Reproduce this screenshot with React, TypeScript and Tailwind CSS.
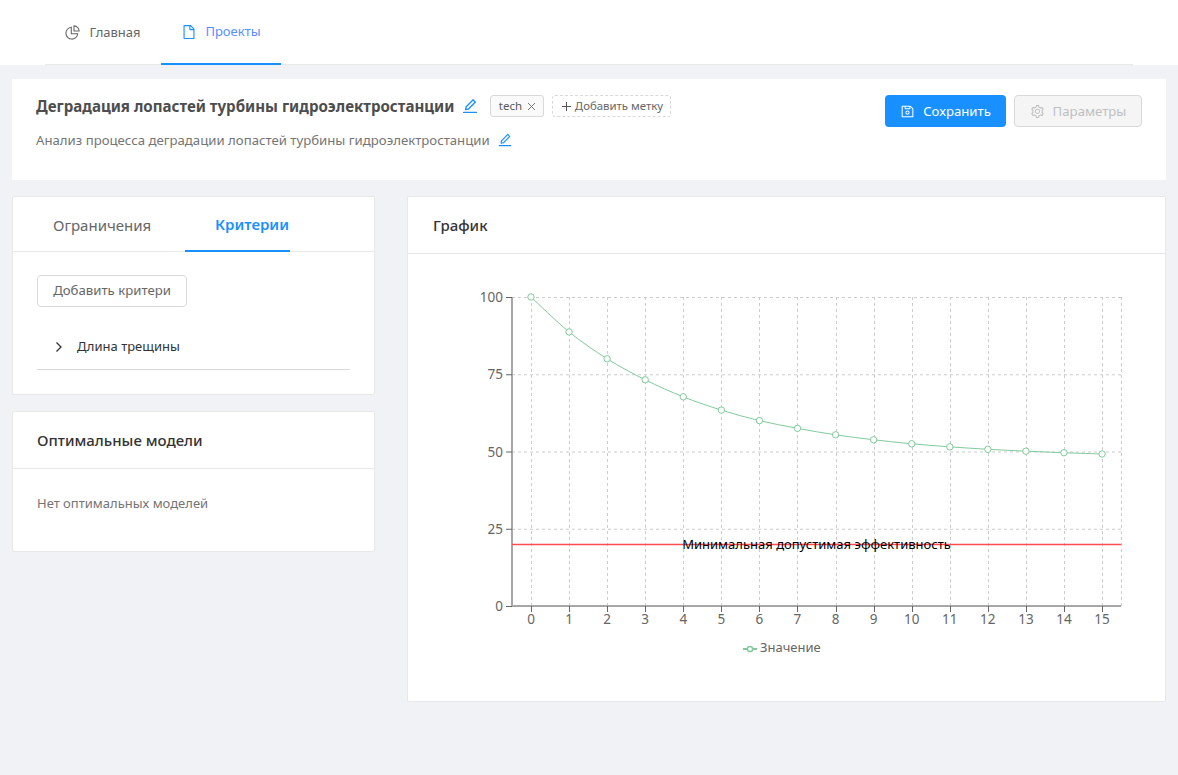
import React from "react";

const values = [100, 88.7, 80, 73.2, 67.7, 63.4, 60, 57.5, 55.4, 53.8, 52.5, 51.5, 50.7, 50.1, 49.6, 49.2];
// The SVG origin sits at page (408, 254)
const X0 = 123;
const STEP = 38.07;
const px = (i: number) => X0 + i * STEP;
const py = (v: number) => 352 - v * 3.09;

function smooth(pts: [number, number][]) {
  let d = `M${pts[0][0]},${pts[0][1]}`;
  for (let i = 0; i < pts.length - 1; i++) {
    const p0 = pts[Math.max(i - 1, 0)];
    const p1 = pts[i];
    const p2 = pts[i + 1];
    const p3 = pts[Math.min(i + 2, pts.length - 1)];
    d += ` C${p1[0] + (p2[0] - p0[0]) / 6},${p1[1] + (p2[1] - p0[1]) / 6} ${p2[0] - (p3[0] - p1[0]) / 6},${p2[1] - (p3[1] - p1[1]) / 6} ${p2[0]},${p2[1]}`;
  }
  return d;
}

function Chart() {
  const pts = values.map((v, i) => [px(i), py(v)] as [number, number]);
  const axis = "#a6a6a6";
  const tick = "#666666";
  return (
    <svg width="757" height="447" className="block" style={{ fontFamily: '"Noto Sans", sans-serif' }}>
      <g stroke="#cccccc" strokeDasharray="3 3" fill="none">
        {[0, 25, 50, 75, 100].map((v) => (
          <line key={v} x1="104" x2="713.5" y1={py(v) + 0.5} y2={py(v) + 0.5} />
        ))}
        {values.map((_, i) => (
          <line key={i} x1={Math.round(px(i)) + 0.5} x2={Math.round(px(i)) + 0.5} y1="43" y2="352" />
        ))}
        <line x1="713.5" x2="713.5" y1="43" y2="352" />
      </g>
      <line x1="104" x2="104" y1="43" y2="353" stroke={axis} strokeWidth="2" />
      <line x1="103" x2="713" y1="352" y2="352" stroke={axis} strokeWidth="2" />
      {[0, 25, 50, 75, 100].map((v) => (
        <g key={v}>
          <line x1="98" x2="104" y1={py(v) + 0.5} y2={py(v) + 0.5} stroke={tick} />
          <text x="95" y={py(v) + 5} textAnchor="end" fontSize="13.5" fill={tick}>
            {v}
          </text>
        </g>
      ))}
      {values.map((_, i) => (
        <g key={i}>
          <line x1={Math.round(px(i)) + 0.5} x2={Math.round(px(i)) + 0.5} y1="352" y2="358" stroke={tick} />
          <text x={px(i)} y="370" textAnchor="middle" fontSize="13.5" fill={tick}>
            {i}
          </text>
        </g>
      ))}
      <line x1="104" x2="713" y1="290.5" y2="290.5" stroke="#ff4d4f" strokeWidth="1.5" />
      <text x="408.5" y="295" textAnchor="middle" fontSize="13" fill="#000000">
        Минимальная допустимая эффективность
      </text>
      <path d={smooth(pts)} fill="none" stroke="#82ca9d" strokeWidth="1" />
      {pts.map((p, i) => (
        <circle key={i} cx={p[0]} cy={p[1]} r="3.2" fill="#ffffff" stroke="#82ca9d" />
      ))}
      <line x1="335" x2="349" y1="395" y2="395" stroke="#82ca9d" strokeWidth="2" />
      <circle cx="342" cy="395" r="2.6" fill="#ffffff" stroke="#82ca9d" strokeWidth="1.5" />
      <text x="352" y="398" fontSize="13" fill="#666666">
        Значение
      </text>
    </svg>
  );
}

function Pencil({ size = 15 }: { size?: number }) {
  return (
    <svg width={size} height={size} viewBox="0 0 1024 1024" fill="#1890ff" className="shrink-0">
      <path d="M257.7 752c2 0 4-.2 6-.5L431.9 722c2-.4 3.9-1.3 5.3-2.8l423.9-423.9a9.96 9.96 0 0 0 0-14.1L694.9 114.9c-1.9-1.9-4.4-2.9-7.1-2.9s-5.2 1-7.1 2.9L256.8 538.8c-1.5 1.5-2.4 3.3-2.8 5.3l-29.5 168.2a33.5 33.5 0 0 0 9.4 29.8c6.6 6.4 14.9 9.9 23.8 9.9zm67.4-174.4L687.8 215l73.3 73.3-362.7 362.6-88.9 15.7 15.6-89zM880 836H144c-17.7 0-32 14.3-32 32v36c0 4.4 3.6 8 8 8h784c4.4 0 8-3.6 8-8v-36c0-17.7-14.3-32-32-32z" />
    </svg>
  );
}

function PieIcon() {
  return (
    <svg width="15" height="15" viewBox="0 0 15 15" fill="none" stroke="#666666" strokeWidth="1.1">
      <path d="M6.3 2.3a5.9 5.9 0 1 0 6.4 6.4H6.3V2.3z" />
      <path d="M9 0.9a5.4 5.4 0 0 1 5.1 5.1H9V0.9z" />
    </svg>
  );
}

function FileIcon() {
  return (
    <svg width="16" height="16" viewBox="0 0 1024 1024" fill="#1890ff">
      <path d="M854.6 288.6L639.4 73.4c-6-6-14.1-9.4-22.6-9.4H192c-17.7 0-32 14.3-32 32v832c0 17.7 14.3 32 32 32h640c17.7 0 32-14.3 32-32V311.3c0-8.5-3.4-16.7-9.4-22.7zM790.2 326H602V137.8L790.2 326zm1.8 562H232V136h302v216a42 42 0 0 0 42 42h216v494z" />
    </svg>
  );
}

function Save() {
  return (
    <svg width="15" height="15" viewBox="0 0 1024 1024" fill="currentColor">
      <path d="M893.3 293.3L730.7 130.7c-7.5-7.5-16.7-13-26.7-16V112H144c-17.7 0-32 14.3-32 32v736c0 17.7 14.3 32 32 32h736c17.7 0 32-14.3 32-32V338.5c0-17-6.7-33.2-18.7-45.2zM384 184h256v104H384V184zm456 656H184V184h136v136c0 17.7 14.3 32 32 32h320c17.7 0 32-14.3 32-32V205.8l136 136V840zM512 442c-79.5 0-144 64.5-144 144s64.5 144 144 144 144-64.5 144-144-64.5-144-144-144zm0 224c-44.2 0-80-35.8-80-80s35.8-80 80-80 80 35.8 80 80-35.8 80-80 80z" />
    </svg>
  );
}

function Gear() {
  return (
    <svg width="15" height="15" viewBox="0 0 1024 1024" fill="currentColor">
      <path d="M924.8 625.7l-65.5-56c3.1-19 4.7-38.4 4.7-57.8s-1.6-38.8-4.7-57.8l65.5-56a32.03 32.03 0 0 0 9.3-35.2l-.9-2.6a443.74 443.74 0 0 0-79.7-137.9l-1.8-2.1a32.12 32.12 0 0 0-35.1-9.5l-81.3 28.9c-30-24.6-63.5-44-99.7-57.6l-15.7-85a32.05 32.05 0 0 0-25.8-25.7l-2.7-.5c-52.1-9.4-106.9-9.4-159 0l-2.7.5a32.05 32.05 0 0 0-25.8 25.7l-15.8 85.4a351.86 351.86 0 0 0-99 57.4l-81.9-29.1a32 32 0 0 0-35.1 9.5l-1.8 2.1a446.02 446.02 0 0 0-79.7 137.9l-.9 2.6c-4.5 12.5-.8 26.5 9.3 35.2l66.3 56.6c-3.1 18.8-4.6 38-4.6 57.1 0 19.2 1.5 38.4 4.6 57.1L99 625.5a32.03 32.03 0 0 0-9.3 35.2l.9 2.6c18.1 50.4 44.9 96.9 79.7 137.9l1.8 2.1a32.12 32.12 0 0 0 35.1 9.5l81.9-29.1c29.8 24.5 63.1 43.9 99 57.4l15.8 85.4a32.05 32.05 0 0 0 25.8 25.7l2.7.5a449.4 449.4 0 0 0 159 0l2.7-.5a32.05 32.05 0 0 0 25.8-25.7l15.7-85a350 350 0 0 0 99.7-57.6l81.3 28.9a32 32 0 0 0 35.1-9.5l1.8-2.1c34.8-41.1 61.6-87.5 79.7-137.9l.9-2.6c4.5-12.3.8-26.3-9.3-35zM788.3 465.9c2.5 15.1 3.8 30.6 3.8 46.1s-1.3 31-3.8 46.1l-6.6 40.1 74.7 63.9a370.03 370.03 0 0 1-42.6 73.6L721 702.8l-31.4 25.8c-23.9 19.6-50.5 35-79.3 45.8l-38.1 14.3-17.9 97a377.5 377.5 0 0 1-85 0l-17.9-97.2-37.8-14.5c-28.5-10.8-55-26.2-78.7-45.7l-31.4-25.9-93.4 33.2c-17-22.9-31.2-47.6-42.6-73.6l75.5-64.5-6.5-40c-2.4-14.9-3.7-30.3-3.7-45.5 0-15.3 1.2-30.6 3.7-45.5l6.5-40-75.5-64.5c11.3-26.1 25.6-50.7 42.6-73.6l93.4 33.2 31.4-25.9c23.7-19.5 50.2-34.9 78.7-45.7l37.9-14.3 17.9-97.2c28.1-3.2 56.8-3.2 85 0l17.9 97 38.1 14.3c28.7 10.8 55.4 26.2 79.3 45.8l31.4 25.8 92.8-32.9c17 22.9 31.2 47.6 42.6 73.6L781.8 426l6.5 39.9zM512 326c-97.2 0-176 78.8-176 176s78.8 176 176 176 176-78.8 176-176-78.8-176-176-176zm79.2 255.2A111.6 111.6 0 0 1 512 614c-29.9 0-58-11.7-79.2-32.8A111.6 111.6 0 0 1 400 502c0-29.9 11.7-58 32.8-79.2C454 401.6 482.1 390 512 390c29.9 0 58 11.6 79.2 32.8A111.6 111.6 0 0 1 624 502c0 29.9-11.7 58-32.8 79.2z" />
    </svg>
  );
}

export default function App() {
  return (
    <div className="min-h-[775px] bg-[#f0f2f5] font-['Noto_Sans','Open_Sans',sans-serif] text-[14px] text-[#595959]">
      <div className="bg-white pl-[45px] pr-[45px]">
        <nav className="flex h-[65px] border-b border-[#e8e8e8]">
          <div className="flex h-[65px] w-[116px] items-center justify-center gap-[9px] text-[13px] text-[#666666]">
            <PieIcon />
            <span>Главная</span>
          </div>
          <div className="flex h-[65px] w-[120px] items-center justify-center gap-[8px] border-b-2 border-[#1890ff] text-[13px] text-[#5a8dff]">
            <FileIcon />
            <span>Проекты</span>
          </div>
        </nav>
      </div>

      <div className="px-3 pt-[14px]">
        <section className="flex h-[101px] justify-between bg-white pl-6 pr-6 pt-4">
          <div>
            <div className="flex h-[22px] items-center">
              <h1 className="text-[15.1px] font-bold leading-[22px] text-[#4d4d4d]">
                Деградация лопастей турбины гидроэлектростанции
              </h1>
              <span className="ml-[7px]">
                <Pencil size={18} />
              </span>
              <span className="ml-[11px] flex h-[22px] w-[54px] items-center justify-center gap-[5px] rounded-[3px] border border-[#d9d9d9] bg-[#fafafa] text-[11.5px] text-[#595959]">
                tech
                <svg width="9" height="9" viewBox="0 0 9 9" stroke="#777777" fill="none">
                  <path d="M1 1l7 7M8 1l-7 7" />
                </svg>
              </span>
              <span className="ml-2 flex h-[22px] w-[119px] items-center justify-center gap-[3px] rounded-[3px] border border-dashed border-[#d9d9d9] text-[11.4px] text-[#666666]">
                <svg width="11" height="11" viewBox="0 0 11 11" stroke="#555555" fill="none">
                  <path d="M5.5 1v9M1 5.5h9" />
                </svg>
                Добавить метку
              </span>
            </div>
            <div className="mt-[13px] flex items-center text-[13.2px] leading-[20px] text-[#757575]">
              <span>Анализ процесса деградации лопастей турбины гидроэлектростанции</span>
              <span className="ml-[7px]">
                <Pencil size={16} />
              </span>
            </div>
          </div>
          <div className="flex gap-2">
            <button className="flex h-8 w-[121px] items-center justify-center gap-2 rounded-[4px] bg-[#1890ff] pt-[1px] text-[13.2px] text-white">
              <Save />
              Сохранить
            </button>
            <button className="flex h-8 w-[128px] items-center justify-center gap-2 rounded-[4px] border border-[#d9d9d9] bg-[#f5f5f5] pt-[1px] text-[13.2px] text-[#bfbfbf]">
              <Gear />
              Параметры
            </button>
          </div>
        </section>

        <div className="mt-4 flex items-start gap-8">
          <div className="flex w-[363px] shrink-0 flex-col gap-4">
            <section className="h-[199px] rounded-[2px] border border-[#e8e8e8] bg-white">
              <div className="flex h-[55px] border-b border-[#e8e8e8] pl-[40px]">
                <div className="flex h-[55px] w-[132px] items-center pt-[2px] text-[15px] text-[#666666]">
                  Ограничения
                </div>
                <div className="flex h-[55px] w-[105px] items-center border-b-2 border-[#1890ff] pl-[30px] pt-[2px] text-[15px] font-semibold text-[#1890ff]">
                  Критерии
                </div>
              </div>
              <div className="px-6 pt-[23px]">
                <button className="flex h-8 w-[150px] items-center justify-center rounded-[4px] border border-[#d9d9d9] bg-white text-[13.2px] text-[#666666]">
                  Добавить критери
                </button>
                <div className="flex h-[63px] items-center border-b border-[#d9d9d9] pl-[16px] pt-[18px] text-[13px] text-[#333333]">
                  <svg width="12" height="12" viewBox="0 0 12 12" fill="none" stroke="#333333" strokeWidth="1.3">
                    <path d="M3.5 1.5L8 6l-4.5 4.5" />
                  </svg>
                  <span className="ml-[12px]">Длина трещины</span>
                </div>
              </div>
            </section>
            <section className="h-[141px] rounded-[2px] border border-[#e8e8e8] bg-white">
              <div className="flex h-[57px] items-center border-b border-[#e8e8e8] px-6 text-[15px] font-medium text-[#333333]">
                Оптимальные модели
              </div>
              <div className="px-6 pt-[23px] text-[13px] leading-[22px] text-[#757575]">Нет оптимальных моделей</div>
            </section>
          </div>

          <section className="h-[506px] flex-1 rounded-[2px] border border-[#e8e8e8] bg-white">
            <div className="flex h-[57px] items-center border-b border-[#e8e8e8] px-[25px] text-[15px] font-medium text-[#333333]">
              График
            </div>
            <Chart />
          </section>
        </div>
      </div>
    </div>
  );
}
